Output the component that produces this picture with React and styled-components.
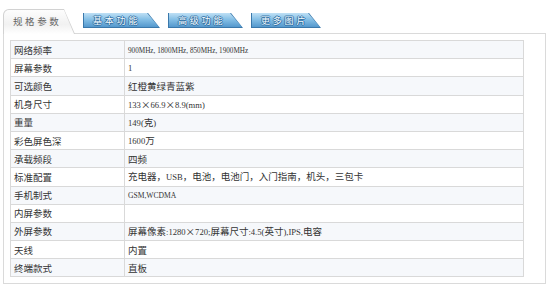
import React from "react"
import styled, {createGlobalStyle} from "styled-components"

const GlobalStyle = createGlobalStyle`
    html, body {
        margin: 0;
        padding: 0;
        background: #fff;
    }
    body {
        font-family: "Noto Sans CJK SC", "Noto Sans", sans-serif;
        color: #333;
    }
`

const Page = styled.div`
    width: 550px;
    height: 296px;
    padding: 9px 0 0 3px;
    box-sizing: border-box;
`
const TabBar = styled.div`
    display: flex;
    align-items: flex-end;
    gap: 8px;
    height: 24px;
    width: 543px;
`
const ActiveTab = styled.div`
    position: relative;
    z-index: 1;
    width: 72px;
    height: 25px;
    margin-bottom: -1px;
    background: #d2d2d2;
    border-top-left-radius: 6px;
    clip-path: polygon(0 0, 61px 0, 100% 100%, 0 100%);
    display: flex;
    align-items: center;
    padding-left: 10px;
    box-sizing: border-box;
    font-size: 9.5px;
    letter-spacing: 2.6px;
    color: #666;

    &::before {
        content: "";
        position: absolute;
        inset: 1px 1px 0 1px;
        border-top-left-radius: 5px;
        background: linear-gradient(#fdfdfd, #f1f1f1 60%, #fff);
        clip-path: polygon(0 0, 60px 0, 100% 100%, 0 100%);
    }
    span {
        position: relative;
        margin-top: -1px;
    }
`
const BlueTab = styled.div`
    position: relative;
    width: ${p => p.$width}px;
    height: 15px;
    margin-bottom: 5px;
    background: #3a78ab;
    clip-path: polygon(0 0, calc(100% - 12px) 0, 100% 100%, 0 100%);
    display: flex;
    align-items: center;
    padding-left: 10px;
    box-sizing: border-box;
    font-size: 9px;
    letter-spacing: 2.8px;
    color: #f4fbff;

    &::before {
        content: "";
        position: absolute;
        inset: 0 1px 1px 1px;
        background: linear-gradient(#bfe0f5, #86c0e6 45%, #5498cd 100%);
        clip-path: polygon(0 0, calc(100% - 12px) 0, 100% 100%, 0 100%);
    }
    span {
        position: relative;
        text-shadow: 1px 0 0 #2f6d9f, -1px 0 0 #2f6d9f, 0 1px 0 #2f6d9f, 0 -1px 0 #3f7fb2;
    }
`
const Panel = styled.div`
    width: 543px;
    height: 251px;
    box-sizing: border-box;
    border: 1px solid #dadada;
    padding: 6px 21px 0 6px;
`
const Table = styled.table`
    width: 514px;
    border-collapse: collapse;
    border: 1px solid #cdcdcd;
`
const Row = styled.tr`
    height: 18.2px;
    background: ${p => (p.$tint ? "#f6f8fb" : "#fff")};
`
const Label = styled.td`
    width: 110px;
    padding: 0 0 0 3px;
    border: 1px solid #d9d9d9;
    font-size: 9.5px;
    line-height: 12px;
    white-space: nowrap;
`
const Value = styled.td`
    padding: 0 0 0 3px;
    border: 1px solid #d9d9d9;
    font-size: 9.5px;
    line-height: 12px;
    white-space: nowrap;
`
const Latin = styled.span`
    font-family: "Liberation Serif", serif;
    font-size: ${p => p.$size || 8.6}px;
    color: #333;
`

const specs = [
    ["网络频率", "900MHz, 1800MHz, 850MHz, 1900MHz", 7.2],
    ["屏幕参数", "1"],
    ["可选颜色", "红橙黄绿青蓝紫"],
    ["机身尺寸", "133×66.9×8.9(mm)"],
    ["重量", "149(克)"],
    ["彩色屏色深", "1600万"],
    ["承载频段", "四频"],
    ["标准配置", "充电器，USB，电池，电池门，入门指南，机头，三包卡"],
    ["手机制式", "GSM,WCDMA", 7.6],
    ["内屏参数", ""],
    ["外屏参数", "屏幕像素:1280×720;屏幕尺寸:4.5(英寸),IPS,电容"],
    ["天线", "内置"],
    ["终端款式", "直板"],
]

const tabs = [
    ["基本功能", 77],
    ["高级功能", 75],
    ["更多图片", 70],
]

const renderText = (text, size) =>
    text.split(/([\x20-\x7e]+)/).map((part, i) =>
        i % 2 ? <Latin key={i} $size={size}>{part}</Latin> : part
    )

const App = () => {
    return (
        <Page>
            <GlobalStyle />
            <TabBar>
                <ActiveTab><span>规格参数</span></ActiveTab>
                {tabs.map(([name, width]) => (
                    <BlueTab key={name} $width={width}><span>{name}</span></BlueTab>
                ))}
            </TabBar>
            <Panel>
                <Table>
                    <tbody>
                        {specs.map(([label, value, size], i) => (
                            <Row key={label} $tint={i % 2 === 0}>
                                <Label>{label}</Label>
                                <Value>{renderText(value, size)}</Value>
                            </Row>
                        ))}
                    </tbody>
                </Table>
            </Panel>
        </Page>
    )
}

export default App
